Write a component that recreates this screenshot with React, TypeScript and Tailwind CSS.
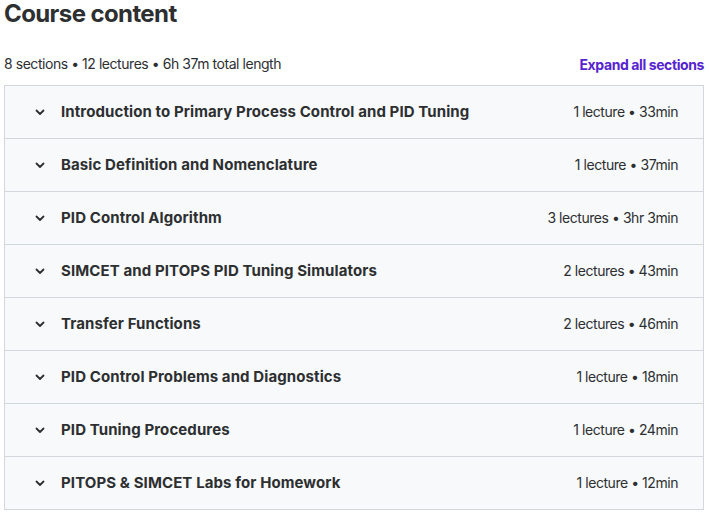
const SECTIONS = [
  { title: 'Introduction to Primary Process Control and PID Tuning', meta: '1 lecture • 33min' },
  { title: 'Basic Definition and Nomenclature', meta: '1 lecture • 37min' },
  { title: 'PID Control Algorithm', meta: '3 lectures • 3hr 3min' },
  { title: 'SIMCET and PITOPS PID Tuning Simulators', meta: '2 lectures • 43min' },
  { title: 'Transfer Functions', meta: '2 lectures • 46min' },
  { title: 'PID Control Problems and Diagnostics', meta: '1 lecture • 18min' },
  { title: 'PID Tuning Procedures', meta: '1 lecture • 24min' },
  { title: 'PITOPS & SIMCET Labs for Homework', meta: '1 lecture • 12min' },
]

function Chevron() {
  return (
    <svg width="12" height="12" viewBox="0 0 12 12" fill="none" className="shrink-0">
      <path d="M2.5 4.5 L6 8 L9.5 4.5" stroke="#2d2f31" strokeWidth="1.8" strokeLinecap="round" strokeLinejoin="round" />
    </svg>
  )
}

export default function App() {
  return (
    <div className="min-h-screen bg-white pl-[4px] pr-[5px] text-[#2d2f31]" style={{ fontFamily: 'Inter, "Noto Sans", sans-serif' }}>
      <h1 className="text-[24px] font-bold leading-[28px] tracking-[-0.6px]">Course content</h1>

      <div className="mt-[26px] flex items-end justify-between">
        <p className="text-[14px] leading-[20px] tracking-[-0.45px]">8 sections • 12 lectures • 6h 37m total length</p>
        <button className="-mb-[1px] text-[14px] font-bold leading-[20px] tracking-[-0.4px] text-[#5624d0]">Expand all sections</button>
      </div>

      {/* Sections */}
      <div className="mt-[11px] w-[700px] border border-[#d1d7dc] bg-[#f7f9fa]">
        {SECTIONS.map((s, i) => (
          <div
            key={s.title}
            className={`flex items-center justify-between pl-[29px] pr-[25px] ${i < SECTIONS.length - 1 ? 'h-[53px] border-b border-[#d1d7dc]' : 'h-[52px]'}`}
          >
            <div className="flex items-center gap-[15px]">
              <Chevron />
              <span className="text-[15px] font-bold tracking-[0.1px]">{s.title}</span>
            </div>
            <span className="-mt-[2px] text-[14px] tracking-[-0.45px]">{s.meta}</span>
          </div>
        ))}
      </div>
    </div>
  )
}
